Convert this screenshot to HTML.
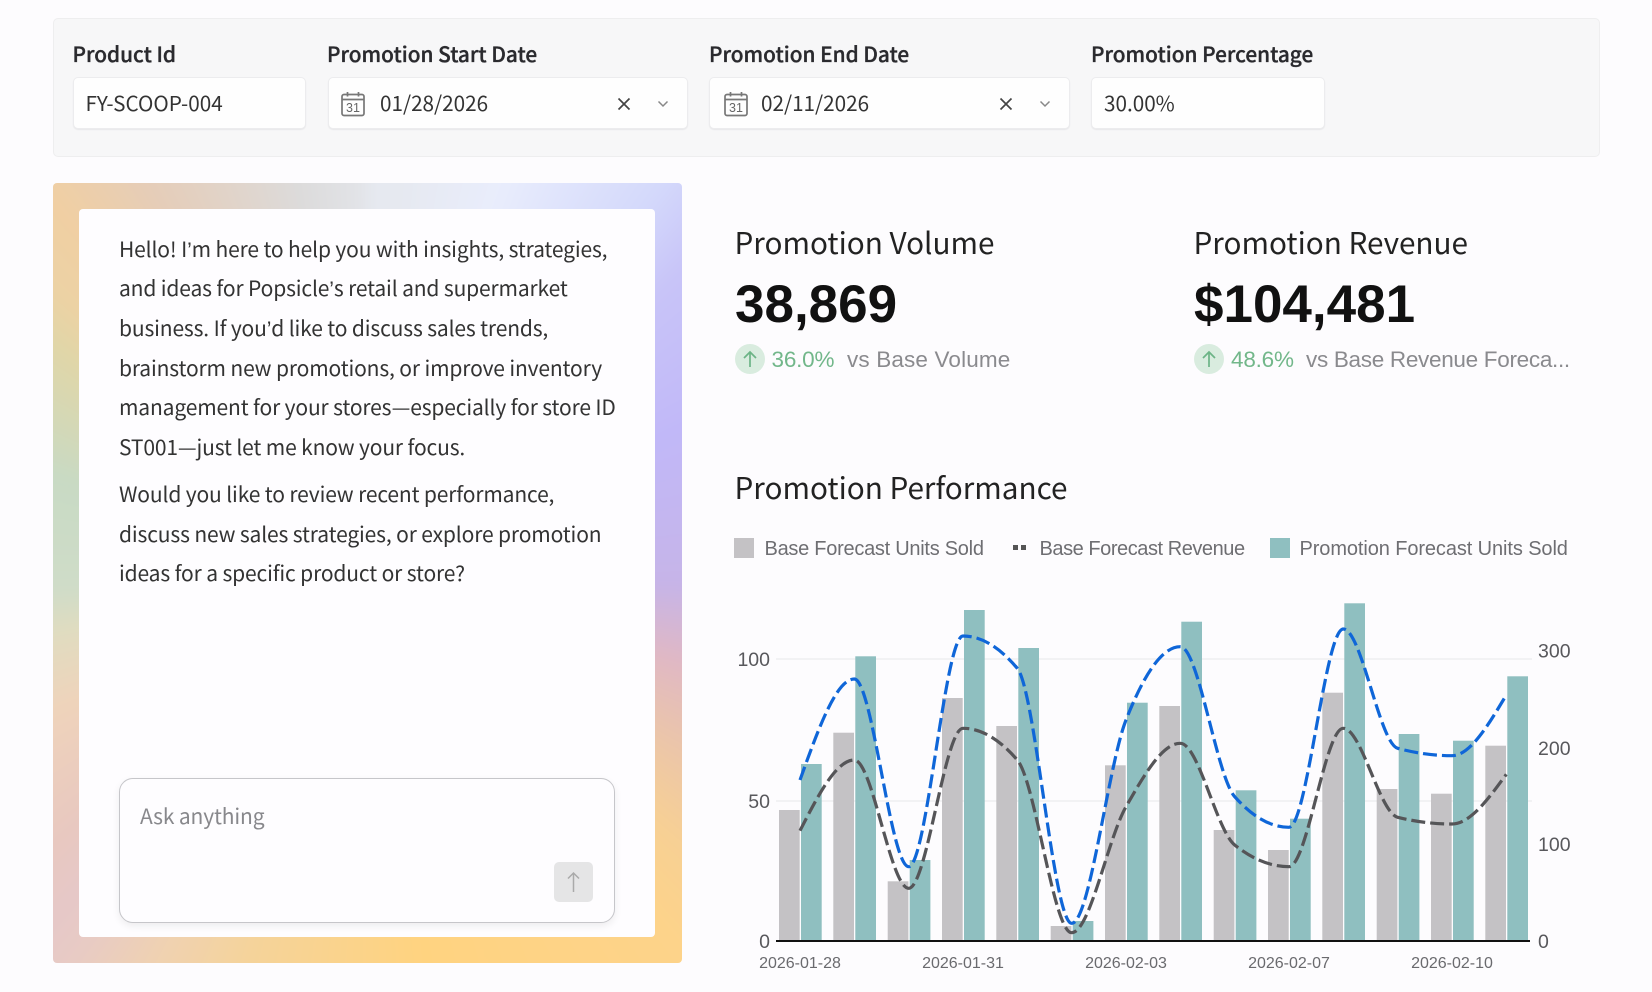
<!DOCTYPE html>
<html lang="en"><head><meta charset="utf-8"><title>Promotion</title>
<style>
html,body{margin:0;padding:0;width:1652px;height:992px;overflow:hidden;background:#fdfcfe}
body{position:relative;font-family:"Liberation Sans","Noto Sans CJK SC",sans-serif;color:#222}
#w{position:absolute;left:0;top:0;width:1652px;height:992px;filter:blur(.35px)}
.s{font-family:"Noto Sans CJK SC","Liberation Sans",sans-serif}
.q{font-family:"Liberation Sans",sans-serif}
.a{position:absolute;white-space:nowrap}
.bar{position:absolute;left:53px;top:18px;width:1545px;height:137px;background:#f7f7f8;border:1px solid #eeeeef;border-radius:5px;box-sizing:content-box}
.lbl{font-size:20.8px;font-weight:500;line-height:30px;color:#2a2a2e;height:30px;-webkit-text-stroke:.35px #2a2a2e}
.inp{position:absolute;top:77px;height:52px;box-sizing:border-box;background:#fefefe;border:1px solid #ececee;border-radius:5px;box-shadow:0 1px 1px #e8e8ea}
.val{font-size:20.7px;line-height:30px;color:#333;height:30px}
.panel{position:absolute;left:53px;top:183px;width:629px;height:780px;border-radius:4px;overflow:hidden}
.grad{position:absolute;left:-20px;top:-20px;width:669px;height:820px;filter:blur(7px);
background:conic-gradient(from 0deg at 334.5px 410px,#e6e9f0 5deg,#e9edfc 19deg,#d4d9fb 37deg,#c8c4f8 46deg,#c1b8f8 65deg,#c6b4e8 92deg,#e0b8c4 106deg,#eac4ac 118deg,#f7d094 131deg,#fdd38a 140deg,#ffd380 172deg,#f5d39a 197deg,#f0d2b0 208deg,#e8cbc4 217deg,#e6c8c8 222deg,#e8c8c0 229deg,#efd3bb 246deg,#e0dcc0 259deg,#cfdcc8 267deg,#c8dac4 287deg,#e0d6a8 306deg,#ecd2a4 312deg,#f0cfa3 320deg,#e5cdb9 331deg,#dcdbdb 350deg,#e6e9f0 365deg)}
.inner{position:absolute;left:79px;top:209px;width:576px;height:728px;background:#fefdff;border-radius:4px}
.p{font-size:21px;letter-spacing:-.14px;line-height:40px;height:40px;color:#333}
.ask{position:absolute;left:119px;top:778px;width:496px;height:145px;box-sizing:border-box;background:#fefdff;border:1.5px solid #c6c6ca;border-radius:14px;box-shadow:0 3px 8px rgba(0,0,0,.07)}
.h{font-size:29.7px;line-height:44px;height:44px;color:#222}
.big{font-size:53px;font-weight:700;line-height:60px;height:60px;color:#111}
.d{font-size:22.5px;line-height:30px;height:30px;color:#8a8a8e}
.g{color:#72b78a}
.lg{font-size:20px;line-height:26px;height:26px;color:#6e6e72}
.sq{position:absolute;width:20px;height:20px;top:538px}
</style></head><body><div id="w">
<div class="bar"></div>
<div class="a s lbl" style="left:72.5px;top:38px">Product Id</div>
<div class="a s lbl" style="left:327px;top:38px">Promotion Start Date</div>
<div class="a s lbl" style="left:709px;top:38px">Promotion End Date</div>
<div class="a s lbl" style="left:1091px;top:38px">Promotion Percentage</div>
<div class="inp" style="left:73px;width:233px"></div>
<div class="inp" style="left:328px;width:360px"></div>
<div class="inp" style="left:709px;width:361px"></div>
<div class="inp" style="left:1091px;width:234px"></div>
<div class="a s val" style="left:85.5px;top:87px">FY-SCOOP-004</div>
<div class="a s val" style="left:380px;top:87px">01/28/2026</div>
<div class="a s val" style="left:761px;top:87px">02/11/2026</div>
<div class="a s val" style="left:1104px;top:87px">30.00%</div>
<svg class="a" style="left:341px;top:91px" width="24" height="26" viewBox="0 0 24 26" fill="none" stroke="#777" stroke-width="1.700"><rect x="1" y="3.500" width="22" height="21" rx="2"/><path d="M1 8.500H23M6.500 1V5.500M17.500 1V5.500"/><text x="12" y="21" font-size="12.500" text-anchor="middle" fill="#666" stroke="none" font-family="Liberation Sans,sans-serif">31</text></svg>
<svg class="a" style="left:723.5px;top:91px" width="24" height="26" viewBox="0 0 24 26" fill="none" stroke="#777" stroke-width="1.700"><rect x="1" y="3.500" width="22" height="21" rx="2"/><path d="M1 8.500H23M6.500 1V5.500M17.500 1V5.500"/><text x="12" y="21" font-size="12.500" text-anchor="middle" fill="#666" stroke="none" font-family="Liberation Sans,sans-serif">31</text></svg>
<svg class="a" style="left:617px;top:97px" width="14" height="14" fill="none" stroke="#444" stroke-width="1.700"><path d="M1.500 1.500L12.500 12.500M12.500 1.500L1.500 12.500"/></svg>
<svg class="a" style="left:656.500px;top:100px" width="12" height="8" fill="none" stroke="#888" stroke-width="1.500"><path d="M1.500 1.500L6 6L10.500 1.500"/></svg>
<svg class="a" style="left:999px;top:97px" width="14" height="14" fill="none" stroke="#444" stroke-width="1.700"><path d="M1.500 1.500L12.500 12.500M12.500 1.500L1.500 12.500"/></svg>
<svg class="a" style="left:1038.500px;top:100px" width="12" height="8" fill="none" stroke="#888" stroke-width="1.500"><path d="M1.500 1.500L6 6L10.500 1.500"/></svg>

<div class="panel"><div class="grad"></div></div><div class="inner"></div>
<div class="a s p" style="left:119px;top:229px">Hello! I<span class="q">’</span>m here to help you with insights, strategies,</div>
<div class="a s p" style="left:119px;top:268px">and ideas for Popsicle<span class="q">’</span>s retail and supermarket</div>
<div class="a s p" style="left:119px;top:308px">business. If you<span class="q">’</span>d like to discuss sales trends,</div>
<div class="a s p" style="left:119px;top:348px">brainstorm new promotions, or improve inventory</div>
<div class="a s p" style="left:119px;top:387px">management for your stores—especially for store ID</div>
<div class="a s p" style="left:119px;top:427px">ST001—just let me know your focus.</div>
<div class="a s p" style="left:119px;top:474px">Would you like to review recent performance,</div>
<div class="a s p" style="left:119px;top:514px">discuss new sales strategies, or explore promotion</div>
<div class="a s p" style="left:119px;top:553px">ideas for a specific product or store?</div>
<div class="ask"></div>
<div class="a s p" style="left:140px;top:796px;color:#88888c">Ask anything</div>
<div class="a" style="left:554px;top:862px;width:39px;height:40px;background:#e5e5e6;border-radius:5px"></div>
<svg class="a" style="left:566px;top:871px" width="15" height="22" fill="none" stroke="#aaa" stroke-width="1.500"><path d="M7.500 21V2M2 7.500L7.500 2L13 7.500"/></svg>

<div class="a s h" style="left:734.5px;top:220px">Promotion Volume</div>
<div class="a s h" style="left:1193.5px;top:220px">Promotion Revenue</div>
<div class="a big" style="left:735px;top:275px">38,869</div>
<div class="a big" style="left:1194px;top:275px">$104,481</div>
<div class="a" style="left:735px;top:344px;width:30px;height:30px;border-radius:50%;background:#d9ecdf"></div>
<svg class="a" style="left:742px;top:350px" width="16" height="18" fill="none" stroke="#6cb486" stroke-width="1.700"><path d="M8 17V2M2 8L8 2L14 8"/></svg>
<div class="a" style="left:1194px;top:344px;width:30px;height:30px;border-radius:50%;background:#d9ecdf"></div>
<svg class="a" style="left:1201px;top:350px" width="16" height="18" fill="none" stroke="#6cb486" stroke-width="1.700"><path d="M8 17V2M2 8L8 2L14 8"/></svg>
<div class="a d g" style="left:771.5px;top:345px;letter-spacing:-.2px">36.0%</div>
<div class="a d" style="left:847px;top:345px;letter-spacing:.15px">vs Base Volume</div>
<div class="a d g" style="left:1231px;top:345px;letter-spacing:-.2px">48.6%</div>
<div class="a d" style="left:1306px;top:345px;letter-spacing:-.3px">vs Base Revenue Foreca...</div>

<div class="a s h" style="left:734.5px;top:465px">Promotion Performance</div>
<div class="sq" style="left:734px;background:#c4c2c5"></div>
<div class="a lg" style="left:764.5px;top:536px;letter-spacing:-.27px">Base Forecast Units Sold</div>
<div class="a" style="left:1013px;top:545px;width:5px;height:5px;background:#555"></div>
<div class="a" style="left:1021px;top:545px;width:5px;height:5px;background:#555"></div>
<div class="a lg" style="left:1039.5px;top:536px;letter-spacing:-.45px">Base Forecast Revenue</div>
<div class="sq" style="left:1270px;background:#8fbfc0"></div>
<div class="a lg" style="left:1299.5px;top:536px;letter-spacing:-.1px">Promotion Forecast Units Sold</div>

<svg class="a" style="left:0;top:0" width="1652" height="992" font-family="Liberation Sans, sans-serif">
<path d="M776 659H1532M776 801H1532" stroke="#eeeef0" stroke-width="1.500" fill="none"/>
<g fill="#c4c2c5">
<rect x="779" y="810" width="20.700" height="131"/>
<rect x="833.300" y="732.700" width="20.700" height="208.300"/>
<rect x="887.700" y="881.300" width="20.700" height="59.700"/>
<rect x="942" y="698" width="20.700" height="243"/>
<rect x="996.300" y="726" width="20.700" height="215"/>
<rect x="1050.700" y="926" width="20.700" height="15"/>
<rect x="1105" y="765.300" width="20.700" height="175.700"/>
<rect x="1159.300" y="706" width="20.700" height="235"/>
<rect x="1213.700" y="830" width="20.700" height="111"/>
<rect x="1268" y="850" width="20.700" height="91"/>
<rect x="1322.300" y="692.700" width="20.700" height="248.300"/>
<rect x="1376.700" y="789" width="20.700" height="152"/>
<rect x="1431" y="793.700" width="20.700" height="147.300"/>
<rect x="1485.300" y="745.700" width="20.700" height="195.300"/>
</g>
<g fill="#8fbfc0">
<rect x="801" y="764" width="20.700" height="177"/>
<rect x="855.300" y="656.300" width="20.700" height="284.700"/>
<rect x="909.700" y="860" width="20.700" height="81"/>
<rect x="964" y="610" width="20.700" height="331"/>
<rect x="1018.300" y="648" width="20.700" height="293"/>
<rect x="1072.700" y="921" width="20.700" height="20"/>
<rect x="1127" y="702.700" width="20.700" height="238.300"/>
<rect x="1181.300" y="621.700" width="20.700" height="319.300"/>
<rect x="1235.700" y="790.300" width="20.700" height="150.700"/>
<rect x="1290" y="818.700" width="20.700" height="122.300"/>
<rect x="1344.300" y="603.300" width="20.700" height="337.700"/>
<rect x="1398.700" y="734" width="20.700" height="207"/>
<rect x="1453" y="740.700" width="20.700" height="200.300"/>
<rect x="1507.300" y="676.300" width="20.700" height="264.700"/>
</g>
<path d="M776 941H1530" stroke="#111" stroke-width="2" fill="none"/>
<path fill="none" stroke="#0f66d8" stroke-width="3.200" stroke-dasharray="14 5" d="M800 780C818.100 729.500,836.200 679,854.300 679C872.400 679,890.600 866.700,908.700 866.700C926.800 866.700,944.900 636,963 636C981.100 636,999.200 646.800,1017.300 668.300C1035.400 689.800,1053.600 923.300,1071.700 923.300C1089.800 923.300,1107.900 766.100,1126 720C1144.100 673.900,1162.200 646.700,1180.300 646.700C1198.400 646.700,1216.600 776.300,1234.700 796.700C1252.800 817.100,1270.900 827.300,1289 827.300C1307.100 827.300,1325.200 629,1343.300 629C1361.400 629,1379.600 743.400,1397.700 748.300C1415.800 753.200,1433.900 755.700,1452 755.700C1470.100 755.700,1488.200 725.300,1506.300 695"/>
<path fill="none" stroke="#555558" stroke-width="3.200" stroke-dasharray="14 5" d="M800 830.700C818.100 795.300,836.200 760,854.300 760C872.400 760,890.600 888.300,908.700 888.300C926.800 888.300,944.900 728.300,963 728.300C981.100 728.300,999.200 738.900,1017.300 760C1035.400 781.100,1053.600 932.700,1071.700 932.700C1089.800 932.700,1107.900 838.300,1126 806.700C1144.100 775.100,1162.200 743.300,1180.300 743.300C1198.400 743.300,1216.600 830.500,1234.700 845C1252.800 859.500,1270.900 866.700,1289 866.700C1307.100 866.700,1325.200 728.300,1343.300 728.300C1361.400 728.300,1379.600 812.800,1397.700 817.300C1415.800 821.800,1433.900 824,1452 824C1470.100 824,1488.200 799.200,1506.300 774.300"/>
<g font-size="19.500" fill="#58585c">
<text x="770" y="666" text-anchor="end">100</text>
<text x="770" y="808" text-anchor="end">50</text>
<text x="770" y="948" text-anchor="end">0</text>
<text x="1538" y="657.500">300</text>
<text x="1538" y="755">200</text>
<text x="1538" y="851">100</text>
<text x="1538" y="948">0</text>
</g>
<g font-size="16" fill="#6a6a6e" text-anchor="middle">
<text x="800" y="968">2026-01-28</text>
<text x="963" y="968">2026-01-31</text>
<text x="1126" y="968">2026-02-03</text>
<text x="1289" y="968">2026-02-07</text>
<text x="1452" y="968">2026-02-10</text>
</g>
</svg>
</div></body></html>
